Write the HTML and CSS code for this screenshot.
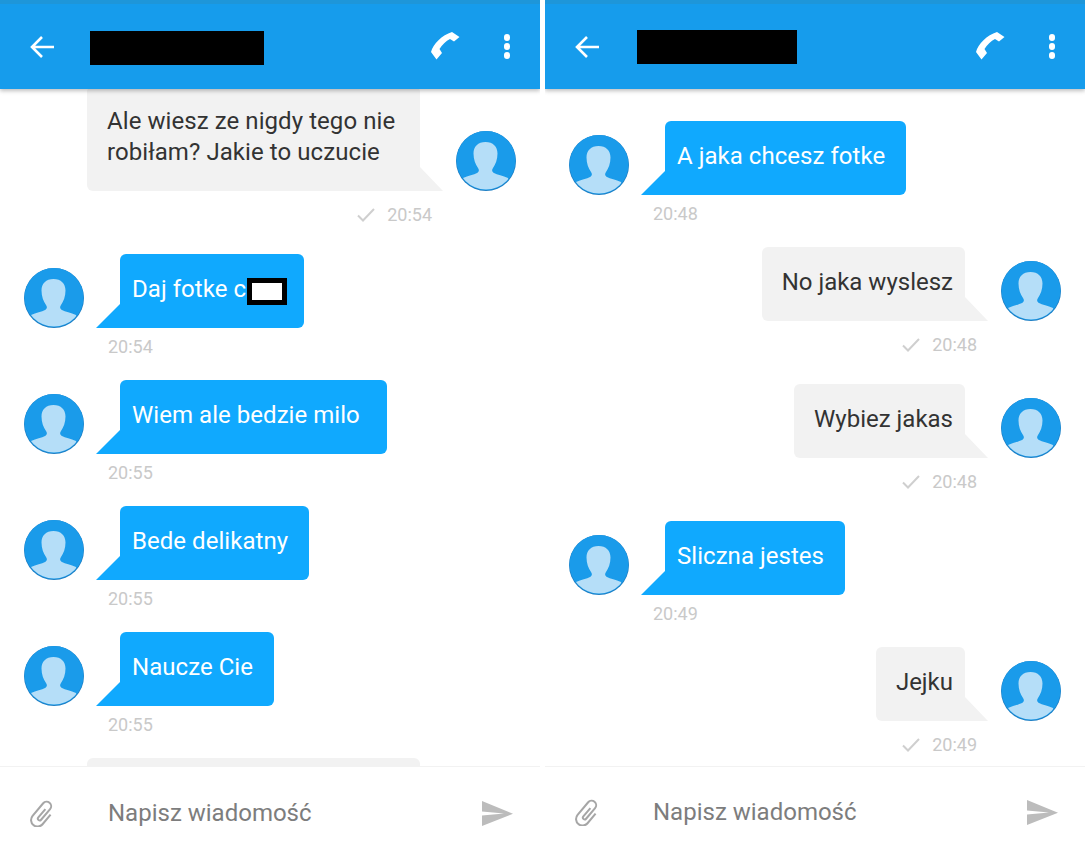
FILE: index.html
```html
<!DOCTYPE html>
<html lang="pl">
<head>
    <meta charset="UTF-8">
    <meta name="viewport" content="width=device-width, initial-scale=1.0">
    <title>Wiadomości</title>
    <link rel="stylesheet" href="styles.css">
</head>
<body>
    <svg class="defs" width="0" height="0">
        <symbol id="avatar" viewBox="0 0 60 60">
            <circle cx="30" cy="30" r="30" fill="#1e7fc4"/>
            <circle cx="30" cy="29.5" r="29.5" fill="#1a9bea"/>
            <clipPath id="avatar-clip"><circle cx="30" cy="29.5" r="29"/></clipPath>
            <path clip-path="url(#avatar-clip)" fill="#b5def8" d="M29.500 11c-7.500 0-12 4.500-12 11.500 0 6 2 11 4.500 14.500 1.500 2 1 4-1 5-3 1.500-9 3-14 5l-4 14h53l-4-14c-5-2-11-3.500-14-5-2-1-2.500-3-1-5 2.500-3.500 4.500-8.500 4.500-14.500 0-7-4.500-11.500-12-11.500z"/>
        </symbol>
        <symbol id="check" viewBox="0 0 18 14">
            <path d="M1 7.500l5 5L17 1" fill="none" stroke="#cfcfcf" stroke-width="2"/>
        </symbol>
        <symbol id="call" viewBox="0 0 30 30">
            <path fill="#fff" d="M1 20C3 12 12 3 22 0L29.500 5 24 9.500 20 7C16 9 12 13 9.500 17L12 21 6.500 27.500Z"/>
        </symbol>
        <symbol id="back" viewBox="0 0 26 24">
            <path d="M25 12H3M13 2L3 12l10 10" fill="none" stroke="#fff" stroke-width="2.600"/>
        </symbol>
        <symbol id="clip" viewBox="0 0 26 28">
            <path transform="rotate(40 13 15)" d="M20 10V22.500a6.500 6.500 0 0 1-13 0V6a4.500 4.500 0 0 1 9 0V20a1.800 1.800 0 0 1-3.600 0V9" fill="none" stroke="#a6a6a6" stroke-width="2"/>
        </symbol>
        <symbol id="send" viewBox="0 0 31 25">
            <path fill="#bcbcbc" d="M0 0L31 12.800 0 25V14.500L22 12.500 0 10.500Z"/>
        </symbol>
    </svg>

    <div class="phone">
        <div class="header">
            <svg class="icon-back"><use href="#back"/></svg>
            <div class="name-block name-left"></div>
            <svg class="icon-call"><use href="#call"/></svg>
            <div class="dots"><span></span><span></span><span></span></div>
        </div>
        <div class="messages messages-left">
            <div class="row out">
                <div class="bubble bubble-long">Ale wiesz ze nigdy tego nie<br>robiłam? Jakie to uczucie</div>
                <svg class="avatar"><use href="#avatar"/></svg>
            </div>
            <div class="meta out"><svg class="check"><use href="#check"/></svg>20:54</div>

            <div class="row in">
                <svg class="avatar"><use href="#avatar"/></svg>
                <div class="bubble bubble-redacted">Daj fotke c<span class="redacted"></span></div>
            </div>
            <div class="meta in">20:54</div>

            <div class="row in">
                <svg class="avatar"><use href="#avatar"/></svg>
                <div class="bubble bubble-wide">Wiem ale bedzie milo</div>
            </div>
            <div class="meta in">20:55</div>

            <div class="row in">
                <svg class="avatar"><use href="#avatar"/></svg>
                <div class="bubble">Bede delikatny</div>
            </div>
            <div class="meta in">20:55</div>

            <div class="row in">
                <svg class="avatar"><use href="#avatar"/></svg>
                <div class="bubble">Naucze Cie</div>
            </div>
            <div class="meta in">20:55</div>

            <div class="row out">
                <div class="bubble bubble-long bubble-cut"></div>
                <svg class="avatar"><use href="#avatar"/></svg>
            </div>
        </div>
        <div class="composer">
            <svg class="icon-clip"><use href="#clip"/></svg>
            <div class="placeholder">Napisz wiadomość</div>
            <svg class="icon-send"><use href="#send"/></svg>
        </div>
    </div>

    <div class="phone">
        <div class="header">
            <svg class="icon-back"><use href="#back"/></svg>
            <div class="name-block name-right"></div>
            <svg class="icon-call"><use href="#call"/></svg>
            <div class="dots"><span></span><span></span><span></span></div>
        </div>
        <div class="messages messages-right">
            <div class="row in">
                <svg class="avatar"><use href="#avatar"/></svg>
                <div class="bubble">A jaka chcesz fotke</div>
            </div>
            <div class="meta in">20:48</div>

            <div class="row out">
                <div class="bubble">No jaka wyslesz</div>
                <svg class="avatar"><use href="#avatar"/></svg>
            </div>
            <div class="meta out"><svg class="check"><use href="#check"/></svg>20:48</div>

            <div class="row out">
                <div class="bubble">Wybiez jakas</div>
                <svg class="avatar"><use href="#avatar"/></svg>
            </div>
            <div class="meta out"><svg class="check"><use href="#check"/></svg>20:48</div>

            <div class="row in">
                <svg class="avatar"><use href="#avatar"/></svg>
                <div class="bubble">Sliczna jestes</div>
            </div>
            <div class="meta in">20:49</div>

            <div class="row out">
                <div class="bubble">Jejku</div>
                <svg class="avatar"><use href="#avatar"/></svg>
            </div>
            <div class="meta out"><svg class="check"><use href="#check"/></svg>20:49</div>
        </div>
        <div class="composer composer-right">
            <svg class="icon-clip"><use href="#clip"/></svg>
            <div class="placeholder">Napisz wiadomość</div>
            <svg class="icon-send"><use href="#send"/></svg>
        </div>
    </div>
</body>
</html>
```

FILE: styles.css
```css
html, body {
    height: 100%;
}

body {
    margin: 0;
    display: flex;
    gap: 5px;
    background-color: #fff;
    font-family: 'Roboto', sans-serif;
    overflow: hidden;
}

.defs {
    position: absolute;
}

.phone {
    width: 540px;
    height: 842px;
    display: flex;
    flex-direction: column;
    background-color: #fff;
    overflow: hidden;
}

.header {
    height: 85px;
    flex: none;
    display: flex;
    align-items: center;
    padding: 0 30px 0 29px;
    border-top: 4px solid #1e96d9;
    background-color: #169cec;
    box-shadow: 0 2px 4px rgba(0, 0, 0, 0.25);
    position: relative;
    z-index: 2;
}

.icon-back {
    width: 26px;
    height: 24px;
    flex: none;
}

.icon-call {
    width: 30px;
    height: 30px;
    margin-left: auto;
}

.name-block {
    height: 34px;
    background-color: #000;
}

.name-left {
    width: 174px;
    margin-left: 35px;
    margin-top: 2px;
}

.name-right {
    width: 160px;
    margin-left: 37px;
}

.dots {
    display: flex;
    flex-direction: column;
    gap: 2.500px;
    margin-left: 44px;
}

.dots span {
    width: 6.500px;
    height: 6.500px;
    border-radius: 50%;
    background-color: #fff;
}

.messages {
    flex: 1;
    min-height: 0;
    overflow: hidden;
}

.messages-left > .row:first-child {
    margin-top: -3px;
}

.messages-right {
    padding-top: 32px;
}

.row {
    display: flex;
    align-items: flex-end;
    gap: 36px;
}

.row.in {
    padding-left: 24px;
}

.row.out {
    justify-content: flex-end;
    padding-right: 24px;
}

.avatar {
    width: 60px;
    height: 60px;
    flex: none;
}

.bubble {
    position: relative;
    padding: 20px 21px 23px 12px;
    font-size: 24px;
    line-height: 31px;
    letter-spacing: 0.04px;
    color: #fff;
    background-color: #10a9fe;
    border-radius: 6px 6px 6px 0;
}

.row.out .bubble {
    padding: 20px 12px 23px 20px;
    letter-spacing: 0;
    color: #333;
    background-color: #f2f2f2;
    border-radius: 6px 6px 0 6px;
}

.row.out .bubble-long {
    width: 333px;
    box-sizing: border-box;
    letter-spacing: 0.07px;
}

.bubble-wide {
    width: 267px;
    box-sizing: border-box;
}

.bubble-redacted {
    padding-right: 17px;
}

.row.out .bubble-cut {
    height: 74px;
}

.bubble::after {
    content: "";
    position: absolute;
    bottom: 0;
    left: -24px;
    width: 24px;
    height: 24px;
    background-color: #10a9fe;
    clip-path: polygon(100% 0, 100% 100%, 0 100%);
}

.row.out .bubble::after {
    left: auto;
    right: -23px;
    width: 23px;
    background-color: #f2f2f2;
    clip-path: polygon(0 0, 100% 100%, 0 100%);
}

.redacted {
    display: inline-block;
    width: 30px;
    height: 17px;
    margin-left: 1px;
    border: 5px solid #000;
    background-color: #fff;
    vertical-align: -8px;
}

.meta {
    font-size: 18px;
    line-height: 24px;
    color: #c9c9c9;
}

.meta.in {
    margin: 7px 0 21px;
    padding-left: 108px;
}

.meta.out {
    display: flex;
    align-items: center;
    justify-content: flex-end;
    gap: 12px;
    margin: 12px 0 27px;
    padding-right: 108px;
}

.check {
    width: 18px;
    height: 14px;
}

.composer {
    height: 76px;
    box-sizing: border-box;
    flex: none;
    display: flex;
    align-items: center;
    padding: 17px 27px 0 29px;
    border-top: 1px solid #f2f2f2;
    background-color: #fff;
}

.composer-right {
    padding-top: 15px;
}

.icon-clip {
    width: 26px;
    height: 28px;
    flex: none;
}

.placeholder {
    margin-left: 53px;
    font-size: 24px;
    color: #7d7d7d;
}

.icon-send {
    width: 31px;
    height: 25px;
    margin-left: auto;
}
```
